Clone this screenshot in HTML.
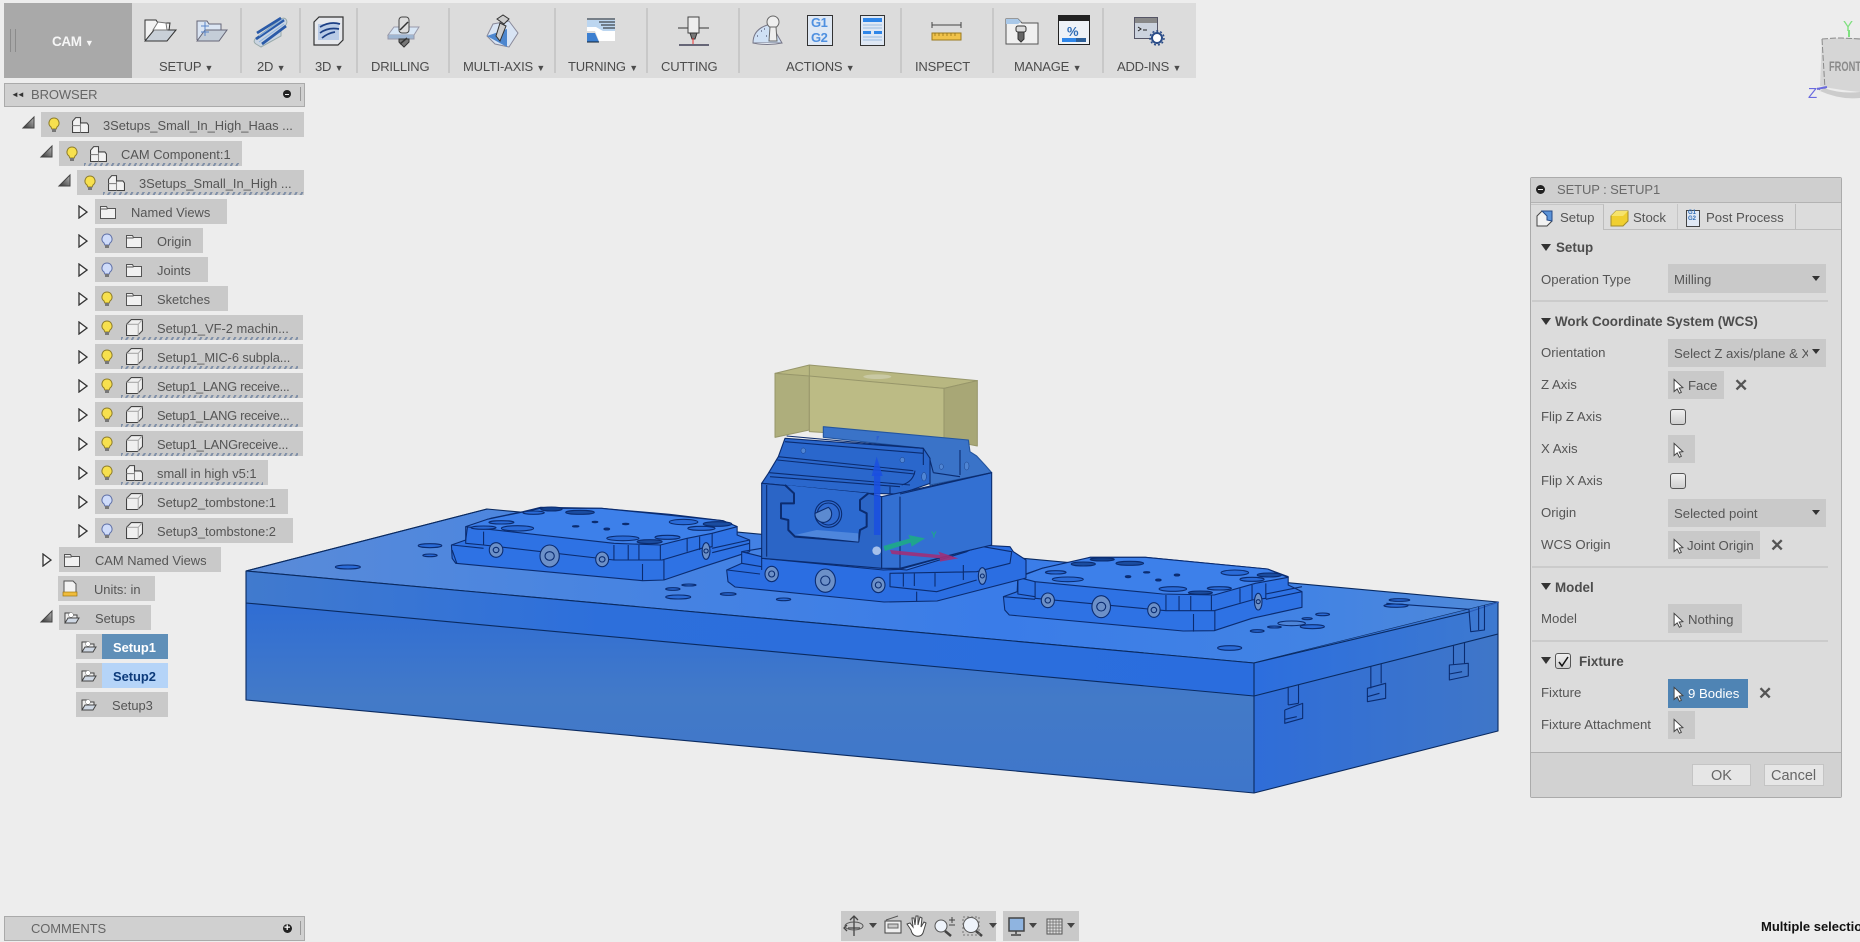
<!DOCTYPE html>
<html><head><meta charset="utf-8"><title>CAM Setup</title>
<style>
html,body{margin:0;padding:0;background:#ededed;width:1860px;height:942px;overflow:hidden}
body{position:relative;font-family:"Liberation Sans",Arial,sans-serif;font-size:13px;color:#555}
.a,.t,.r,.f,.s{position:absolute}
.t{white-space:nowrap;line-height:16px}
.r{background:#c9c9c9;height:25px}
.r span{position:absolute;top:5px;white-space:nowrap;line-height:17px;font-size:12.9px;color:#555}
.h{position:absolute;height:3px;bottom:0;background:repeating-linear-gradient(118deg,#8090a8 0 2px,transparent 2px 5px)}
.l{position:absolute;top:59px;line-height:16px;font-size:13px;color:#4c4c4c;white-space:nowrap;letter-spacing:-.2px}
.l small{font-size:9px;letter-spacing:0}
.sep{position:absolute;top:8px;height:65px;width:2px;background:#c8c8c8}
svg.ic{position:absolute;overflow:visible}
.f{background:#c9c9c9;left:1668px}
.s{left:1532px;width:296px;height:2px;background:#cbcbcb}
.lbl{position:absolute;left:1541px;white-space:nowrap;font-size:13.2px;line-height:16px;color:#555}
.b{position:absolute;white-space:nowrap;font-size:13.4px;line-height:16px;font-weight:bold;color:#4d4d4d}
.tri{position:absolute;width:0;height:0;border-left:5px solid transparent;border-right:5px solid transparent;border-top:7px solid #333}
.dd{position:absolute;left:1812px;width:0;height:0;border-left:4px solid transparent;border-right:4px solid transparent;border-top:5px solid #333}
.chk{position:absolute;left:1670px;width:14px;height:14px;border:1.5px solid #555;border-radius:3px;background:linear-gradient(#f0f0f0,#cfcfcf)}
.x{position:absolute;font-weight:bold;font-size:17px;line-height:16px;color:#555}
</style></head><body>

<svg width="0" height="0" style="position:absolute">
<defs>
<symbol id="by" viewBox="0 0 12 16"><path d="M6 1a5 5 0 0 0-3 9l.8 2h4.400l.8-2a5 5 0 0 0-3-9z" fill="#f7e04e" stroke="#8d7c2a"/><rect x="4" y="12" width="4" height="3" fill="#777"/></symbol>
<symbol id="bb" viewBox="0 0 12 16"><path d="M6 1a5 5 0 0 0-3 9l.8 2h4.400l.8-2a5 5 0 0 0-3-9z" fill="#cfdcfa" stroke="#5f70a8"/><rect x="4" y="12" width="4" height="3" fill="#777"/></symbol>
<symbol id="fo" viewBox="0 0 16 14"><path d="M.5 1.500h6l1 2h8v10H.5z" fill="#f1f1f1" stroke="#555"/><path d="M.5 4h7" stroke="#555"/></symbol>
<symbol id="cu" viewBox="0 0 16 16"><path d="M.5 5l4.500-4.500h10.500v10.500l-4.500 4.500H.5z" fill="#efefef" stroke="#444"/><path d="M.5 5h11v10.500M11.500 5l4-4.500" stroke="#aaa" fill="none"/></symbol>
<symbol id="co" viewBox="0 0 16 16"><path d="M.5 15.500V5l3-3.500h4.500v5h6l1.500 2v7z" fill="#f2f2f2" stroke="#444"/><path d="M8 7v8.500M.5 9h7.500" stroke="#888" fill="none"/></symbol>
<symbol id="op" viewBox="0 0 16 13"><path d="M1 12V2h5l1 2h6v3" fill="#eee" stroke="#444"/><path d="M1 12l3-5h11l-3 5z" fill="#cfd8e4" stroke="#444"/><circle cx="7" cy="4" r="2.400" fill="#fff" stroke="#666" stroke-width=".5"/></symbol>
<symbol id="ra" viewBox="0 0 10 14"><path d="M1 1l8 6-8 6z" fill="#f4f4f4" stroke="#333" stroke-width="1.300"/></symbol>
<symbol id="cr" viewBox="0 0 10 14"><path d="M1 1v11l2.800-2.400 2 4 1.800-.9-2-3.800 3.400-.4z" fill="#fff" stroke="#444" stroke-width=".9"/></symbol>
<linearGradient id="td" x1="0" y1="1" x2="1" y2="0"><stop offset="0" stop-color="#333"/><stop offset="1" stop-color="#bbb"/></linearGradient>
</defs></svg>

<!-- toolbar -->
<div class="a" style="left:4px;top:3px;width:1192px;height:75px;background:#dcdcdc"></div>
<div class="a" style="left:4px;top:3px;width:128px;height:75px;background:#a9a9a9"></div>
<div class="a" style="left:10px;top:29px;width:4px;height:23px;border-left:1px solid #8b8b8b;border-right:1px solid #8b8b8b"></div>
<div class="t" style="left:52px;top:34px;color:#f6f6f6;font-weight:bold;font-size:13.5px;letter-spacing:-.4px">CAM <small style="font-size:9px">▼</small></div>
<div class="sep" style="left:240px"></div><div class="sep" style="left:299px"></div><div class="sep" style="left:356px"></div><div class="sep" style="left:448px"></div><div class="sep" style="left:554px"></div><div class="sep" style="left:646px"></div><div class="sep" style="left:738px"></div><div class="sep" style="left:900px"></div><div class="sep" style="left:992px"></div><div class="sep" style="left:1102px"></div>
<div class="l" style="left:159px">SETUP <small>▼</small></div>
<div class="l" style="left:257px">2D <small>▼</small></div>
<div class="l" style="left:315px">3D <small>▼</small></div>
<div class="l" style="left:371px">DRILLING</div>
<div class="l" style="left:463px">MULTI-AXIS <small>▼</small></div>
<div class="l" style="left:568px">TURNING <small>▼</small></div>
<div class="l" style="left:661px">CUTTING</div>
<div class="l" style="left:786px">ACTIONS <small>▼</small></div>
<div class="l" style="left:915px">INSPECT</div>
<div class="l" style="left:1014px">MANAGE <small>▼</small></div>
<div class="l" style="left:1117px">ADD-INS <small>▼</small></div>

<svg class="ic" style="left:0;top:0" width="1200" height="60" fill="none">
<!-- setup 1 -->
<path d="M145 40V20h11l2 3h12l-1 7" fill="#f2f2f2" stroke="#333"/><path d="M145 41l9-11h22l-9 11z" fill="#c9d0d8" stroke="#333"/><path d="M153 30l5-8 8 1 1 7z" fill="#fff" stroke="#777"/>
<!-- setup 2 -->
<path d="M197 40V21h10l2 3h12v6" fill="#dbe5f3" stroke="#667"/><path d="M197 41l8-11h22l-8 11z" fill="#c4cdd8" stroke="#667"/><path d="M201 26h8M205 22v14M201 32h8" stroke="#5a85c8"/>
<!-- 2D -->
<path d="M256 38l25-19c5-3 8 3 4 7l-4 4v6l-20 11-5-3c-3-2-2-4 0-6z" fill="#c9d4e2" stroke="#9aa"/>
<path d="M257 33l24-15M256 39l28-19M262 44l24-18" stroke="#2a5aa8" stroke-width="2.800"/>
<path d="M259 36l24-17M259 42l25-18" stroke="#8fb4e0"/>
<!-- 3D -->
<path d="M314 22l5-5h24v23l-5 5h-24z" fill="#e6e8ec" stroke="#333" stroke-width="1.200"/><path d="M318 24h21v16h-21z" fill="#b9cbe6"/>
<path d="M320 27q10-6 20-3M320 33q8-6 19-4M322 38q6-5 13-6" stroke="#1c3f85" stroke-width="1.700"/>
<!-- drilling -->
<path d="M388 35l6-8h25l-5 8z" fill="#d8e6f5" stroke="#99a"/><path d="M388 35v4h26v-4" fill="#9fb6d2" stroke="#99a"/>
<rect x="399" y="17" width="10" height="16" rx="3" fill="#ddd" stroke="#444"/><path d="M399 39h10v3l-5 5-5-5z" fill="#777" stroke="#333"/><path d="M400 30l8-8M400 44l7-6" stroke="#333" stroke-width="1.500"/>
<!-- multi -->
<path d="M487 36l6-12 16-3 9 12-9 14-14-3z" fill="#d8e4f4" stroke="#889"/><path d="M487 36l20 11V29z" fill="#4d87cf"/>
<path d="M497 19l6-4 6 4-5 5zM500 23l6 3-6 15-4-5z" fill="#ccc" stroke="#333"/>
<!-- turning -->
<path d="M587 21h28v20h-16l-4-10h-8z" fill="#fff"/><path d="M587 33h8l4 9h-12z" fill="#3c7fd0"/><path d="M587 20h28v11h-12l-7 -4h-9z" fill="#bcd6f0"/><path d="M599 22h16M601 25h14M603 28h12" stroke="#222"/>
<path d="M587 19h28M587 42h12" stroke="#123"/>
<!-- cutting -->
<path d="M678 28h31" stroke="#333"/><rect x="688" y="17" width="11" height="16" fill="#eee" stroke="#444"/><path d="M690 33h7l-2 6h-3z" fill="#777" stroke="#333"/><path d="M693 38v7" stroke="#e33"/><path d="M679 45h30" stroke="#667" stroke-width="2"/>
<!-- actions 1 -->
<path d="M753 43q0-15 18-19l11 19z" fill="#cfe0f4" stroke="#778"/><path d="M753 43q14 3 29 0" stroke="#778" fill="#e8eef6"/><path d="M757 36h1M761 31h1M766 36h1M764 29h1M770 41h1" stroke="#335"/>
<rect x="767" y="16" width="12" height="12" rx="6" fill="#eee" stroke="#666"/><path d="M770 27h6l1 14h-8z" fill="#eee" stroke="#666"/>
<!-- g1g2 -->
<rect x="807.500" y="15.500" width="25" height="30" fill="#dfe8f4" stroke="#333"/>
<!-- doc -->
<rect x="860.500" y="15.500" width="24" height="30" fill="#dfe8f4" stroke="#333"/><rect x="863" y="18" width="19" height="4" fill="#2f86e8"/><path d="M863 25h19M863 28h19M863 37h19M863 40h19" stroke="#9bbce0"/><rect x="863" y="31" width="8" height="3" fill="#2f86e8"/><rect x="874" y="31" width="8" height="3" fill="#2f86e8"/>
<!-- inspect -->
<path d="M932 25h29M932 22v6M961 22v6" stroke="#444"/><rect x="932" y="33" width="29" height="7" fill="#f0c24a" stroke="#9a7a20"/><path d="M935 33v3M939 33v3M943 33v3M947 33v3M951 33v3M955 33v3" stroke="#8a6a10" stroke-width=".7"/>
<!-- manage 1 -->
<path d="M1006 44V19h12l4 4h16v21z" fill="#f0f0f0" stroke="#555"/><path d="M1006 19h12l3 3-3 2h-12z" fill="#a9c8e8"/><rect x="1016" y="26" width="10" height="6" rx="2" fill="#ddd" stroke="#333"/><path d="M1018 32h6v7l-3 3-3-3z" fill="#666" stroke="#333"/>
<!-- manage 2 -->
<rect x="1058.500" y="15.500" width="31" height="29" fill="#eef2f7" stroke="#222"/><rect x="1058" y="15" width="32" height="6" fill="#222"/><rect x="1062" y="38" width="14" height="4" fill="#2f86e8"/><rect x="1076" y="38" width="10" height="4" fill="#2d5f98"/>
<!-- addin -->
<rect x="1134.500" y="17.500" width="23" height="21" fill="#ccd3de" stroke="#556"/><rect x="1135" y="18" width="22" height="5" fill="#888"/><path d="M1138 27l3 2-3 2M1143 30h4" stroke="#222"/>
<circle cx="1157" cy="38" r="5" fill="#fff" stroke="#2a4c88" stroke-width="2"/><circle cx="1157" cy="38" r="7" stroke="#2a4c88" stroke-dasharray="2 2" stroke-width="1.500"/>
</svg>
<div class="t" style="left:811px;top:15px;font-size:13px;font-weight:bold;color:#4f90e0;line-height:15px;letter-spacing:-.5px">G1<br>G2</div>
<div class="t" style="left:1067px;top:24px;font-size:13px;font-weight:bold;color:#2f6cb5">%</div>

<!-- browser header -->
<div class="a" style="left:4px;top:83px;width:299px;height:22px;background:#d0d0d0;border:1px solid #aaa"></div>
<div class="t" style="left:31px;top:87px;color:#666;letter-spacing:-.1px">BROWSER</div>
<div class="t" style="left:11px;top:87px;font-size:8px;color:#333;letter-spacing:-2px">◄◄</div>
<div class="a" style="left:283px;top:90px;width:8px;height:8px;border-radius:50%;background:#222"></div><div class="a" style="left:285px;top:93.500px;width:4px;height:1px;background:#eee"></div>
<div class="a" style="left:300px;top:87px;width:2px;height:14px;border-left:1px solid #999"></div>

<!-- tree rows -->
<div class="r" style="left:41px;top:112px;width:263px"><span style="left:62px">3Setups_Small_In_High_Haas ...</span></div>
<div class="r" style="left:59px;top:141px;width:183px"><span style="left:62px">CAM Component:1</span><i class="h" style="left:25px;right:3px"></i></div>
<div class="r" style="left:77px;top:170px;width:227px"><span style="left:62px">3Setups_Small_In_High ...</span><i class="h" style="left:26px;right:0"></i></div>
<div class="r" style="left:95px;top:199px;width:132px"><span style="left:36px">Named Views</span></div>
<div class="r" style="left:95px;top:228px;width:108px"><span style="left:62px">Origin</span></div>
<div class="r" style="left:95px;top:257px;width:113px"><span style="left:62px">Joints</span></div>
<div class="r" style="left:95px;top:286px;width:133px"><span style="left:62px">Sketches</span></div>
<div class="r" style="left:95px;top:315px;width:208px"><span style="left:62px">Setup1_VF-2 machin...</span><i class="h" style="left:26px;right:5px"></i></div>
<div class="r" style="left:95px;top:344px;width:208px"><span style="left:62px;letter-spacing:-.1px">Setup1_MIC-6 subpla...</span><i class="h" style="left:26px;right:5px"></i></div>
<div class="r" style="left:95px;top:373px;width:208px"><span style="left:62px;letter-spacing:-.3px">Setup1_LANG receive...</span><i class="h" style="left:26px;right:5px"></i></div>
<div class="r" style="left:95px;top:402px;width:208px"><span style="left:62px;letter-spacing:-.3px">Setup1_LANG receive...</span><i class="h" style="left:26px;right:5px"></i></div>
<div class="r" style="left:95px;top:431px;width:208px"><span style="left:62px;letter-spacing:-.2px">Setup1_LANGreceive...</span><i class="h" style="left:26px;right:5px"></i></div>
<div class="r" style="left:95px;top:460px;width:173px"><span style="left:62px">small in high v5:1</span><i class="h" style="left:26px;right:5px"></i></div>
<div class="r" style="left:95px;top:489px;width:193px"><span style="left:62px">Setup2_tombstone:1</span></div>
<div class="r" style="left:95px;top:518px;width:198px"><span style="left:62px">Setup3_tombstone:2</span></div>
<div class="r" style="left:59px;top:547px;width:162px"><span style="left:36px">CAM Named Views</span></div>
<div class="r" style="left:58px;top:576px;width:97px"><span style="left:36px">Units: in</span></div>
<div class="r" style="left:59px;top:605px;width:92px"><span style="left:36px">Setups</span></div>
<div class="r" style="left:76px;top:634px;width:92px"><i class="a" style="left:26px;top:0;width:66px;height:25px;background:#5f8fb8"></i><span style="left:37px;color:#fff;font-weight:bold">Setup1</span></div>
<div class="r" style="left:76px;top:663px;width:92px"><i class="a" style="left:26px;top:0;width:66px;height:25px;background:#b5d4f8"></i><span style="left:37px;color:#0c3a7a;font-weight:bold">Setup2</span></div>
<div class="r" style="left:76px;top:692px;width:92px"><span style="left:36px">Setup3</span></div>

<svg class="ic" style="left:0;top:100px" width="130" height="640">
<!-- expanders -->
<path d="M23 28L34 17v11z" fill="url(#td)" stroke="#444"/><path d="M41 57L52 46v11z" fill="url(#td)" stroke="#444"/><path d="M59 86L70 75v11z" fill="url(#td)" stroke="#444"/>
<use href="#ra" x="78" y="105" width="10" height="14"/><use href="#ra" x="78" y="134" width="10" height="14"/><use href="#ra" x="78" y="163" width="10" height="14"/><use href="#ra" x="78" y="192" width="10" height="14"/><use href="#ra" x="78" y="221" width="10" height="14"/><use href="#ra" x="78" y="250" width="10" height="14"/><use href="#ra" x="78" y="279" width="10" height="14"/><use href="#ra" x="78" y="308" width="10" height="14"/><use href="#ra" x="78" y="337" width="10" height="14"/><use href="#ra" x="78" y="366" width="10" height="14"/><use href="#ra" x="78" y="395" width="10" height="14"/><use href="#ra" x="78" y="424" width="10" height="14"/><use href="#ra" x="42" y="453" width="10" height="14"/>
<path d="M41 522L52 511v11z" fill="url(#td)" stroke="#444"/>
<!-- bulbs -->
<use href="#by" x="48" y="17" width="12" height="16"/><use href="#by" x="66" y="46" width="12" height="16"/><use href="#by" x="84" y="75" width="12" height="16"/>
<use href="#bb" x="101" y="133" width="12" height="16"/><use href="#bb" x="101" y="162" width="12" height="16"/><use href="#by" x="101" y="191" width="12" height="16"/><use href="#by" x="101" y="220" width="12" height="16"/><use href="#by" x="101" y="249" width="12" height="16"/><use href="#by" x="101" y="278" width="12" height="16"/><use href="#by" x="101" y="307" width="12" height="16"/><use href="#by" x="101" y="336" width="12" height="16"/><use href="#by" x="101" y="365" width="12" height="16"/><use href="#bb" x="101" y="394" width="12" height="16"/><use href="#bb" x="101" y="423" width="12" height="16"/>
<!-- component icons -->
<use href="#co" x="72" y="16" width="17" height="17"/><use href="#co" x="90" y="45" width="17" height="17"/><use href="#co" x="108" y="74" width="17" height="17"/>
<use href="#fo" x="100" y="105" width="16" height="14"/><use href="#fo" x="126" y="134" width="16" height="14"/><use href="#fo" x="126" y="163" width="16" height="14"/><use href="#fo" x="126" y="192" width="16" height="14"/>
<use href="#cu" x="126" y="219" width="17" height="17"/><use href="#cu" x="126" y="248" width="17" height="17"/><use href="#cu" x="126" y="277" width="17" height="17"/><use href="#cu" x="126" y="306" width="17" height="17"/><use href="#cu" x="126" y="335" width="17" height="17"/><use href="#co" x="126" y="364" width="17" height="17"/><use href="#cu" x="126" y="393" width="17" height="17"/><use href="#cu" x="126" y="422" width="17" height="17"/>
<use href="#fo" x="64" y="453" width="16" height="14"/>
<path d="M64 481h9l3 3v11H64z" fill="#f3f3f3" stroke="#555"/><rect x="63" y="492" width="14" height="4" fill="#f0bc3c" stroke="#a07810" stroke-width=".7"/>
<use href="#op" x="64" y="511" width="16" height="13"/><use href="#op" x="81" y="540" width="16" height="13"/><use href="#op" x="81" y="569" width="16" height="13"/><use href="#op" x="81" y="598" width="16" height="13"/>
</svg>

<!-- 3D model -->
<svg class="a" style="left:0;top:0" width="1860" height="942" viewBox="0 0 1860 942">
<defs>
<linearGradient id="gt" x1="0" y1="0" x2="1" y2="0"><stop offset="0" stop-color="#5a8bd8"/><stop offset=".25" stop-color="#4a85e0"/><stop offset=".6" stop-color="#3a7ce8"/><stop offset=".85" stop-color="#4283e4"/><stop offset="1" stop-color="#5089d8"/></linearGradient>
<linearGradient id="gu" x1="0" y1="0" x2="1" y2="0"><stop offset="0" stop-color="#417ace"/><stop offset=".35" stop-color="#2d6fdb"/><stop offset="1" stop-color="#2a6dde"/></linearGradient>
<linearGradient id="gl" x1="0" y1="0" x2="0" y2="1"><stop offset="0" stop-color="#2f6dd4"/><stop offset=".5" stop-color="#437ac8"/><stop offset="1" stop-color="#3e76ca"/></linearGradient>
<linearGradient id="gr" x1="0" y1="0" x2="1" y2="0"><stop offset="0" stop-color="#2f6dd8"/><stop offset="1" stop-color="#3f76c8"/></linearGradient>
<linearGradient id="gru" x1="0" y1="0" x2="1" y2="0"><stop offset="0" stop-color="#2c6ede"/><stop offset="1" stop-color="#3d79d0"/></linearGradient>
</defs>

<!-- base block -->
<g stroke="#0a2a60" stroke-width="1.100" stroke-linejoin="round">
<polygon points="246,571 487,509 1498,602 1254,663" fill="url(#gt)"/>
<polygon points="246,571 1254,663 1254,696 246,603" fill="url(#gu)" stroke="none"/>
<polygon points="246,603 1254,696 1254,793 246,700" fill="url(#gl)" stroke="none"/>
<polygon points="1254,663 1498,602 1498,634 1254,696" fill="url(#gru)" stroke="none"/>
<polygon points="1254,696 1498,634 1498,731 1254,793" fill="url(#gr)" stroke="none"/>
<path d="M246 571L487 509M246 571L1254 663L1469 612M246 603L1254 696L1498 634M246 571V700L1254 793L1498 731V602M1254 663V793" fill="none"/>
<path d="M1469 612l30-10" fill="none" stroke="#2a5ab8"/>
</g>

<!-- left plate, zoom-8 coordinates -->
<g transform="translate(230,480) scale(.35714,.33333)" fill="#2b6fe0" stroke="#0b2c70" stroke-width="1.100" stroke-linejoin="round">
<path vector-effect="non-scaling-stroke" d="M620 195L622 235L632 250L1155 302L1215 300L1320 262L1455 215V180L1420 165V140L1380 122L1230 103L1040 85L870 82L820 95L730 115L665 140L660 180z" fill="#2e72e4"/>
<path vector-effect="non-scaling-stroke" d="M660 140L720 118L870 85L1040 85L1380 122L1420 140L1350 160L1280 175L1205 195L1075 190z" fill="#3d80ea"/>
<path vector-effect="non-scaling-stroke" d="M660 140V190L710 195L1075 240L1210 240L1320 205L1350 200V160M710 155V195M1075 195V240M1115 195V240M1145 195V240M1205 195V240M1280 175V215M1315 170V210" fill="none"/>
<path vector-effect="non-scaling-stroke" d="M622 210L635 250M622 195L710 205M1155 252V302M1215 240V300M1350 205L1455 180M1350 218L1455 190" fill="none"/>
<g fill="#2a6bd8">
<ellipse vector-effect="non-scaling-stroke" cx="330" cy="261" rx="35" ry="6"/><ellipse vector-effect="non-scaling-stroke" cx="560" cy="197" rx="33" ry="6"/><ellipse vector-effect="non-scaling-stroke" cx="560" cy="226" rx="20" ry="4"/><ellipse vector-effect="non-scaling-stroke" cx="805" cy="145" rx="45" ry="8"/><ellipse vector-effect="non-scaling-stroke" cx="900" cy="87" rx="30" ry="6" fill="#12408f"/><ellipse vector-effect="non-scaling-stroke" cx="980" cy="97" rx="40" ry="6" fill="#1a4ca0"/><ellipse vector-effect="non-scaling-stroke" cx="850" cy="98" rx="30" ry="5"/><ellipse vector-effect="non-scaling-stroke" cx="1270" cy="126" rx="40" ry="8"/><ellipse vector-effect="non-scaling-stroke" cx="1365" cy="132" rx="40" ry="7" fill="#1a4ca0"/><ellipse vector-effect="non-scaling-stroke" cx="1100" cy="175" rx="45" ry="7"/><ellipse vector-effect="non-scaling-stroke" cx="1225" cy="172" rx="35" ry="6"/><ellipse vector-effect="non-scaling-stroke" cx="1175" cy="185" rx="35" ry="6" fill="#1a4ca0"/><ellipse vector-effect="non-scaling-stroke" cx="1240" cy="327" rx="20" ry="4"/><ellipse vector-effect="non-scaling-stroke" cx="1255" cy="351" rx="35" ry="6"/><ellipse vector-effect="non-scaling-stroke" cx="1285" cy="315" rx="20" ry="3"/><ellipse vector-effect="non-scaling-stroke" cx="1395" cy="342" rx="22" ry="4"/><ellipse vector-effect="non-scaling-stroke" cx="1550" cy="358" rx="20" ry="4"/><ellipse vector-effect="non-scaling-stroke" cx="760" cy="127" rx="35" ry="5"/><ellipse vector-effect="non-scaling-stroke" cx="710" cy="143" rx="35" ry="5"/><ellipse vector-effect="non-scaling-stroke" cx="1320" cy="145" rx="38" ry="6"/><ellipse vector-effect="non-scaling-stroke" cx="1022" cy="126" rx="8" ry="2" fill="#0e2f78"/><ellipse vector-effect="non-scaling-stroke" cx="968" cy="139" rx="9" ry="2" fill="#0e2f78"/><ellipse vector-effect="non-scaling-stroke" cx="1055" cy="147" rx="8" ry="3" fill="#0e2f78"/><ellipse vector-effect="non-scaling-stroke" cx="1108" cy="132" rx="9" ry="2" fill="#0e2f78"/>
</g>
<g fill="#6c90c8"><ellipse vector-effect="non-scaling-stroke" cx="745" cy="210" rx="19" ry="22"/><ellipse vector-effect="non-scaling-stroke" cx="895" cy="228" rx="27" ry="33"/><ellipse vector-effect="non-scaling-stroke" cx="1042" cy="238" rx="18" ry="22"/><ellipse vector-effect="non-scaling-stroke" cx="1333" cy="213" rx="11" ry="25"/></g>
<g fill="none"><circle vector-effect="non-scaling-stroke" cx="745" cy="210" r="8"/><circle vector-effect="non-scaling-stroke" cx="895" cy="228" r="13"/><circle vector-effect="non-scaling-stroke" cx="1042" cy="238" r="8"/><circle vector-effect="non-scaling-stroke" cx="1333" cy="213" r="6"/></g>
</g>

<!-- right plate, zoom-9 coordinates -->
<g transform="translate(980,520) scale(.34435,.33333)" fill="#2b6fe0" stroke="#0b2c70" stroke-linejoin="round" stroke-width="1.100">
<path vector-effect="non-scaling-stroke" d="M68 230L72 270L85 285L590 333L680 332L790 295L935 262V215L895 195V170L835 147L480 112L320 112L270 128L180 145L110 170L108 215z" fill="#2e72e4"/>
<path vector-effect="non-scaling-stroke" d="M110 172L180 145L320 112H480L835 147L895 172L800 190L680 225L530 222L160 185z" fill="#3d80ea"/>
<path vector-effect="non-scaling-stroke" d="M110 172V222L160 230L160 185V235L540 272H680L790 240L830 235V190M540 225V272M578 228V272M612 228V272M672 226V272M755 205V248M790 195V240M620 282V335M682 272V332M830 222L935 200M830 238L935 215M68 230L160 238" fill="none"/>
<g fill="#2a6bd8">
<ellipse vector-effect="non-scaling-stroke" cx="255" cy="178" rx="45" ry="7"/><ellipse vector-effect="non-scaling-stroke" cx="220" cy="157" rx="30" ry="5"/><ellipse vector-effect="non-scaling-stroke" cx="300" cy="132" rx="35" ry="6" fill="#1a4ca0"/><ellipse vector-effect="non-scaling-stroke" cx="355" cy="118" rx="35" ry="5" fill="#12408f"/><ellipse vector-effect="non-scaling-stroke" cx="435" cy="130" rx="40" ry="6" fill="#1a4ca0"/><ellipse vector-effect="non-scaling-stroke" cx="560" cy="207" rx="40" ry="7"/><ellipse vector-effect="non-scaling-stroke" cx="640" cy="218" rx="35" ry="5" fill="#1a4ca0"/><ellipse vector-effect="non-scaling-stroke" cx="695" cy="205" rx="35" ry="5"/><ellipse vector-effect="non-scaling-stroke" cx="740" cy="158" rx="40" ry="8"/><ellipse vector-effect="non-scaling-stroke" cx="790" cy="178" rx="35" ry="6"/><ellipse vector-effect="non-scaling-stroke" cx="840" cy="165" rx="35" ry="6" fill="#1a4ca0"/><ellipse vector-effect="non-scaling-stroke" cx="725" cy="384" rx="35" ry="7"/><ellipse vector-effect="non-scaling-stroke" cx="805" cy="333" rx="20" ry="4"/><ellipse vector-effect="non-scaling-stroke" cx="965" cy="320" rx="35" ry="6"/><ellipse vector-effect="non-scaling-stroke" cx="905" cy="310" rx="40" ry="7" fill="#4d85da"/><ellipse vector-effect="non-scaling-stroke" cx="855" cy="321" rx="20" ry="3"/><ellipse vector-effect="non-scaling-stroke" cx="995" cy="283" rx="20" ry="4"/><ellipse vector-effect="non-scaling-stroke" cx="950" cy="296" rx="15" ry="3"/><ellipse vector-effect="non-scaling-stroke" cx="1218" cy="240" rx="30" ry="4"/><ellipse vector-effect="non-scaling-stroke" cx="1208" cy="257" rx="35" ry="5"/><ellipse vector-effect="non-scaling-stroke" cx="430" cy="170" rx="8" ry="3" fill="#0e2f78"/><ellipse vector-effect="non-scaling-stroke" cx="518" cy="180" rx="8" ry="3" fill="#0e2f78"/><ellipse vector-effect="non-scaling-stroke" cx="572" cy="165" rx="8" ry="3" fill="#0e2f78"/><ellipse vector-effect="non-scaling-stroke" cx="484" cy="157" rx="9" ry="2" fill="#0e2f78"/>
</g>
<g fill="#6c90c8"><ellipse vector-effect="non-scaling-stroke" cx="197" cy="241" rx="19" ry="22"/><ellipse vector-effect="non-scaling-stroke" cx="352" cy="260" rx="27" ry="33"/><ellipse vector-effect="non-scaling-stroke" cx="505" cy="270" rx="18" ry="22"/><ellipse vector-effect="non-scaling-stroke" cx="808" cy="245" rx="11" ry="25"/></g>
<g fill="none"><circle vector-effect="non-scaling-stroke" cx="197" cy="241" r="8"/><circle vector-effect="non-scaling-stroke" cx="352" cy="260" r="13"/><circle vector-effect="non-scaling-stroke" cx="505" cy="270" r="8"/><circle vector-effect="non-scaling-stroke" cx="808" cy="245" r="6"/></g>
<!-- notches -->
<g fill="none">
<path vector-effect="non-scaling-stroke" d="M895 500V555M925 495V550M885 570V610L937 595V550L885 570M895 555L925 550M885 598L920 590"/>
<path vector-effect="non-scaling-stroke" d="M1135 440V505M1165 432V490M1125 505V545L1178 535V490ZM1125 530L1160 520"/>
<path vector-effect="non-scaling-stroke" d="M1375 375V435M1407 368V430M1363 435V480L1418 468V430ZM1363 462L1400 455"/>
<path vector-effect="non-scaling-stroke" d="M1180 250L1420 268L1425 335L1465 330V255M1448 260V330"/>
</g>
</g>

<!-- centre plate & vise, zoom-7 coordinates -->
<g transform="translate(720,350) scale(.33333)" stroke="#0b2c70" stroke-width="1.100" stroke-linejoin="round">
<!-- stock -->
<g stroke="#97966a" stroke-width="1">
<polygon vector-effect="non-scaling-stroke" points="165,70 268,45 772,92 672,115" fill="#b8b781"/>
<polygon vector-effect="non-scaling-stroke" points="165,70 268,78 268,240 165,262" fill="#aeae7c"/>
<polygon vector-effect="non-scaling-stroke" points="268,78 672,115 672,270 268,245" fill="#bcbb85"/>
<polygon vector-effect="non-scaling-stroke" points="672,115 772,92 772,288 672,268" fill="#a8a776"/>
<path vector-effect="non-scaling-stroke" d="M268 45V78" fill="none"/>
</g>
<ellipse cx="472" cy="80" rx="42" ry="7" fill="#c9c9a4" stroke="none"/>
<!-- centre plate -->
<path vector-effect="non-scaling-stroke" d="M20 660L24 695L45 711L492 756L651 753L918 684V630L880 605L870 590L780 585L740 605L560 660L125 620L65 605L65 640z" fill="#2b6ee2"/>
<path vector-effect="non-scaling-stroke" d="M65 605L125 595V625L490 660L540 658L730 605L790 590L875 605L870 640L770 665L510 670V710L650 725L770 690M125 625V660M65 640L125 650M510 670V710M550 668V710M583 668V708M645 668V710M730 645V690M22 660L120 672M590 725V755" fill="none"/>
<g fill="#6c90c8">
<ellipse vector-effect="non-scaling-stroke" cx="155" cy="672" rx="20" ry="23"/><ellipse vector-effect="non-scaling-stroke" cx="316" cy="692" rx="30" ry="35"/><ellipse vector-effect="non-scaling-stroke" cx="475" cy="705" rx="20" ry="23"/><ellipse vector-effect="non-scaling-stroke" cx="787" cy="678" rx="12" ry="25"/>
</g>
<g fill="none"><circle vector-effect="non-scaling-stroke" cx="155" cy="672" r="9"/><circle vector-effect="non-scaling-stroke" cx="316" cy="692" r="14"/><circle vector-effect="non-scaling-stroke" cx="475" cy="705" r="9"/><circle vector-effect="non-scaling-stroke" cx="787" cy="678" r="6"/></g>
<!-- rear jaws -->
<path vector-effect="non-scaling-stroke" d="M310 230L745 270L750 305L770 318L795 345L815 368L630 405L610 295L310 262z" fill="#3a73c8" stroke="#24559f"/>
<path vector-effect="non-scaling-stroke" d="M640 368L720 380M720 300V375M630 330L640 368" fill="none"/>
<!-- upper vise -->
<path vector-effect="non-scaling-stroke" d="M145 370L175 320L195 265L610 295L630 325V400L540 432L445 430L125 400z" fill="#2a67cc"/>
<path vector-effect="non-scaling-stroke" d="M200 258L610 295M195 275L610 310M175 320L580 362M172 330L585 372M148 368L570 405M150 380L540 410M610 295V345M585 362Q580 395 545 405M510 410V432" fill="none"/>
<ellipse cx="250" cy="302" rx="7" ry="8" fill="#4f85d4"/><ellipse cx="547" cy="330" rx="7" ry="8" fill="#4f85d4"/><ellipse cx="612" cy="380" rx="7" ry="13" fill="#4f85d4"/><ellipse cx="664" cy="350" rx="6" ry="8" fill="#4f85d4"/><ellipse cx="740" cy="348" rx="7" ry="12" fill="#4f85d4"/>
<!-- body -->
<polygon vector-effect="non-scaling-stroke" points="125,400 445,430 485,440 485,655 125,625" fill="#2b65c6"/>
<polygon vector-effect="non-scaling-stroke" points="485,440 815,368 815,585 730,605 540,655 485,655" fill="#3370d2"/>
<path vector-effect="non-scaling-stroke" d="M540 440V655M140 405V620M540 432L815 368" fill="none"/>
<path vector-effect="non-scaling-stroke" d="M195 405L222 430V460H183V505L205 510V540L225 560L415 575L420 540L440 530V490L420 480V450L445 430" fill="#2c6ad0" stroke-width="2"/>
<path vector-effect="non-scaling-stroke" d="M225 555L290 540L415 550L415 575z" fill="#4e86dc" stroke="none"/>
<circle vector-effect="non-scaling-stroke" cx="325" cy="492" r="40" fill="#2f6ad0"/><circle vector-effect="non-scaling-stroke" cx="325" cy="492" r="33" fill="none"/>
<path vector-effect="non-scaling-stroke" d="M285 490a25 25 0 1 0 40-18z" fill="#5c8ad0"/>
<!-- gizmo -->
<g stroke="none">
<rect x="462" y="370" width="19" height="185" fill="#1a4fe0" opacity=".85"/><path d="M455 378L470 320L488 378z" fill="#1a4fe0" opacity=".85"/><path d="M470 258l8 0-8 18z" fill="#2a5ad0" opacity=".7"/>
<path d="M490 588L570 565L565 555L615 565L575 590L572 578L495 603z" fill="#1fa58e"/>
<path d="M510 600L660 615L655 605L715 625L660 635L660 625L515 612z" fill="#a02f78" opacity=".9"/>
<circle cx="470" cy="602" r="13" fill="#a6c0ea"/>
</g>
<text x="633" y="563" font-family="Liberation Sans,sans-serif" font-size="26" font-weight="bold" fill="#1fa58e" stroke="none">Y</text>
</g>
</svg>

<!-- view cube -->
<svg class="a" style="left:1790px;top:0" width="70" height="110">
<path d="M32 40Q36 38 70 38V92Q48 90 30 86z" fill="#d6d6d6"/>
<path d="M32 39l14-1 6 0 18 1M32 39l3 50M30 90l-3-2" stroke="#8a8a8a" stroke-dasharray="6 2" fill="none"/>
<path d="M34 88Q50 94 70 92V98Q50 100 30 91z" fill="#b5b5b5" opacity=".6"/>
<path d="M59 30V37" stroke="#7fe07f" stroke-width="2"/>
<path d="M27 89l10-2" stroke="#6a6adf" stroke-width="2"/>
<text x="39" y="71" font-family="Liberation Sans,sans-serif" font-size="14" font-weight="bold" fill="#8a8a8a" textLength="32" lengthAdjust="spacingAndGlyphs">FRONT</text>
<text x="53" y="31" font-family="Liberation Sans,sans-serif" font-size="15" fill="#7fe07f">Y</text>
<text x="18" y="98" font-family="Liberation Sans,sans-serif" font-size="15" fill="#6a6adf">Z</text>
</svg>

<!-- setup panel -->
<div class="a" style="left:1530px;top:177px;width:310px;height:619px;background:#dcdcdc;border:1px solid #ababab;border-radius:2px"></div>
<div class="a" style="left:1531px;top:178px;width:310px;height:24px;background:#cfcfcf;border-bottom:1px solid #b3b3b3"></div>
<div class="a" style="left:1536px;top:185px;width:9px;height:9px;border-radius:50%;background:#222"></div><div class="a" style="left:1538px;top:189px;width:5px;height:1px;background:#eee"></div>
<div class="t" style="left:1557px;top:182px;color:#6a6a6a;font-size:13px;letter-spacing:-.1px">SETUP : SETUP1</div>
<div class="a" style="left:1531px;top:229px;width:310px;height:1px;background:#bdbdbd"></div>
<div class="a" style="left:1531px;top:204px;width:73px;height:26px;background:#dcdcdc;border-right:1px solid #bdbdbd;border-top:1px solid #c6c6c6;box-sizing:border-box"></div>
<div class="a" style="left:1677px;top:204px;width:1px;height:25px;background:#c6c6c6"></div><div class="a" style="left:1795px;top:204px;width:1px;height:25px;background:#bdbdbd"></div>
<svg class="ic" style="left:1535px;top:207px" width="260" height="20">
<path d="M2 9l5-5h10v10l-5 5H2z" fill="#f2f2f2" stroke="#444"/><path d="M7 4h10v10l-5-1V9z" fill="#5b93d8" stroke="#244a88"/>
<path d="M76 9l5-5h12v10l-5 5H76z" fill="#f0cf2f" stroke="#a08b2c"/><path d="M81 4h12l-5 5H76z" fill="#f6e36c"/>
<rect x="151.500" y="3.500" width="13" height="16" fill="#e0e8f4" stroke="#444"/>
</svg>
<div class="t" style="left:1688px;top:210px;font-size:6px;line-height:6px;color:#2f6cb5;font-weight:bold">G1<br>G2</div>
<div class="t" style="left:1560px;top:210px;font-size:13.2px">Setup</div>
<div class="t" style="left:1633px;top:210px;font-size:13.2px">Stock</div>
<div class="t" style="left:1706px;top:210px;font-size:13.2px">Post Process</div>

<div class="tri" style="left:1541px;top:244px"></div><div class="b" style="left:1556px;top:240px">Setup</div>
<div class="lbl" style="top:272px">Operation Type</div>
<div class="f" style="top:264px;width:158px;height:29px"></div><div class="t" style="left:1674px;top:272px;font-size:13.2px">Milling</div><div class="dd" style="top:276px"></div>
<div class="s" style="top:300px"></div>

<div class="tri" style="left:1541px;top:318px"></div><div class="b" style="left:1555px;top:314px">Work Coordinate System (WCS)</div>
<div class="lbl" style="top:345px">Orientation</div>
<div class="f" style="top:339px;width:158px;height:28px"></div><div class="t" style="left:1674px;top:346px;font-size:13.2px;width:134px;overflow:hidden">Select Z axis/plane &amp; X...</div><div class="dd" style="top:349px"></div>
<div class="lbl" style="top:377px">Z Axis</div>
<div class="f" style="top:371px;width:56px;height:28px"></div><svg class="ic" style="left:1673px;top:378px" width="11" height="16"><use href="#cr" width="11" height="16"/></svg><div class="t" style="left:1688px;top:378px;font-size:13.2px">Face</div>
<div class="x" style="left:1734px;top:378px">✕</div>
<div class="lbl" style="top:409px">Flip Z Axis</div><div class="chk" style="top:409px"></div>
<div class="lbl" style="top:441px">X Axis</div>
<div class="f" style="top:435px;width:27px;height:28px"></div><svg class="ic" style="left:1673px;top:442px" width="11" height="16"><use href="#cr" width="11" height="16"/></svg>
<div class="lbl" style="top:473px">Flip X Axis</div><div class="chk" style="top:473px"></div>
<div class="lbl" style="top:505px">Origin</div>
<div class="f" style="top:499px;width:158px;height:28px"></div><div class="t" style="left:1674px;top:506px;font-size:13.2px">Selected point</div><div class="dd" style="top:510px"></div>
<div class="lbl" style="top:537px">WCS Origin</div>
<div class="f" style="top:531px;width:92px;height:28px"></div><svg class="ic" style="left:1673px;top:538px" width="11" height="16"><use href="#cr" width="11" height="16"/></svg><div class="t" style="left:1687px;top:538px;font-size:13.2px">Joint Origin</div>
<div class="x" style="left:1770px;top:538px">✕</div>
<div class="s" style="top:566px"></div>

<div class="tri" style="left:1541px;top:583px"></div><div class="b" style="left:1555px;top:580px">Model</div>
<div class="lbl" style="top:611px">Model</div>
<div class="f" style="top:604px;width:74px;height:29px"></div><svg class="ic" style="left:1673px;top:612px" width="11" height="16"><use href="#cr" width="11" height="16"/></svg><div class="t" style="left:1688px;top:612px;font-size:13.2px">Nothing</div>
<div class="s" style="top:640px"></div>

<div class="tri" style="left:1541px;top:657px"></div><div class="chk" style="left:1555px;top:653px"></div>
<svg class="ic" style="left:1558px;top:656px" width="12" height="12"><path d="M1 6l3 4 6-9" fill="none" stroke="#111" stroke-width="1.500"/></svg>
<div class="b" style="left:1579px;top:654px">Fixture</div>
<div class="lbl" style="top:685px">Fixture</div>
<div class="f" style="top:679px;width:80px;height:29px;background:#4f84b4"></div><svg class="ic" style="left:1673px;top:686px" width="11" height="16"><use href="#cr" width="11" height="16"/></svg><div class="t" style="left:1688px;top:686px;font-size:13.2px;color:#fff">9 Bodies</div>
<div class="x" style="left:1758px;top:686px">✕</div>
<div class="lbl" style="top:717px">Fixture Attachment</div>
<div class="f" style="top:711px;width:27px;height:28px"></div><svg class="ic" style="left:1673px;top:718px" width="11" height="16"><use href="#cr" width="11" height="16"/></svg>

<div class="a" style="left:1531px;top:752px;width:310px;height:44px;background:#d2d2d2;border-top:1px solid #adadad"></div>
<div class="a" style="left:1692px;top:764px;width:57px;height:20px;background:#e6e6e6;border:1px solid #c4c4c4"></div><div class="t" style="left:1711px;top:768px;font-size:14.5px;color:#666">OK</div>
<div class="a" style="left:1764px;top:764px;width:58px;height:20px;background:#e6e6e6;border:1px solid #c4c4c4"></div><div class="t" style="left:1771px;top:768px;font-size:14.5px;color:#666">Cancel</div>

<!-- comments -->
<div class="a" style="left:4px;top:916px;width:299px;height:23px;background:#d0d0d0;border:1px solid #aaa"></div>
<div class="t" style="left:31px;top:921px;color:#666;letter-spacing:-.1px">COMMENTS</div>
<div class="a" style="left:283px;top:924px;width:9px;height:9px;border-radius:50%;background:#222"></div><div class="t" style="left:284px;top:921px;font-size:11px;line-height:14px;color:#fff;font-weight:bold">+</div>
<div class="a" style="left:300px;top:921px;width:2px;height:14px;border-left:1px solid #999"></div>

<!-- nav bar -->
<div class="a" style="left:841px;top:911px;width:155px;height:30px;background:#c9c9c9"></div>
<div class="a" style="left:1003px;top:911px;width:76px;height:30px;background:#c9c9c9"></div>
<svg class="ic" style="left:841px;top:911px" width="240" height="30" fill="none">
<path d="M13 5v20M9 9l4-4 4 4M7 17h12M6 14l-3 3 3 3" stroke="#444" stroke-width="1.300"/><ellipse cx="13" cy="15" rx="9" ry="4" stroke="#555"/>
<path d="M28 12h8l-4 5z" fill="#444"/>
<rect x="44" y="10" width="16" height="12" fill="#eee" stroke="#444"/><rect x="47" y="13" width="10" height="4" fill="#c8c8c8" stroke="#666"/><path d="M45 9l12-4" stroke="#555"/>
<path d="M70 19l-4-6 3-1 3 4-1-9 2 0 1 7 1-9h2v9l2-8 2 1-1 9 3-5 2 1-3 10q-2 4-7 3-4-1-5-6z" fill="#fff" stroke="#444"/>
<circle cx="100" cy="15" r="6" fill="#eef3fa" stroke="#555"/><path d="M104 20l6 5" stroke="#444" stroke-width="2.500"/><path d="M108 9h6M111 6v6M108 14h6" stroke="#444"/>
<circle cx="130" cy="14" r="7.500" fill="#eef3fa" stroke="#555"/><path d="M135 20l6 5" stroke="#444" stroke-width="2.500"/><rect x="122" y="6" width="16" height="18" stroke="#777" stroke-dasharray="2 2"/>
<path d="M148 12h8l-4 5z" fill="#444"/>
<rect x="168" y="7" width="15" height="13" fill="#8fb4e0" stroke="#444" stroke-width="1.500"/><path d="M175 20v3M170 24h10" stroke="#444" stroke-width="1.500"/>
<path d="M188 12h8l-4 5z" fill="#444"/>
<rect x="206" y="8" width="15" height="15" fill="#ddd" stroke="#555"/><path d="M209 8v15M212 8v15M215 8v15M218 8v15M206 11h15M206 14h15M206 17h15M206 20h15" stroke="#666" stroke-width=".7"/>
<path d="M226 12h8l-4 5z" fill="#444"/>
</svg>

<div class="t" style="left:1761px;top:919px;font-size:13px;font-weight:bold;color:#111">Multiple selections</div>
</body></html>
